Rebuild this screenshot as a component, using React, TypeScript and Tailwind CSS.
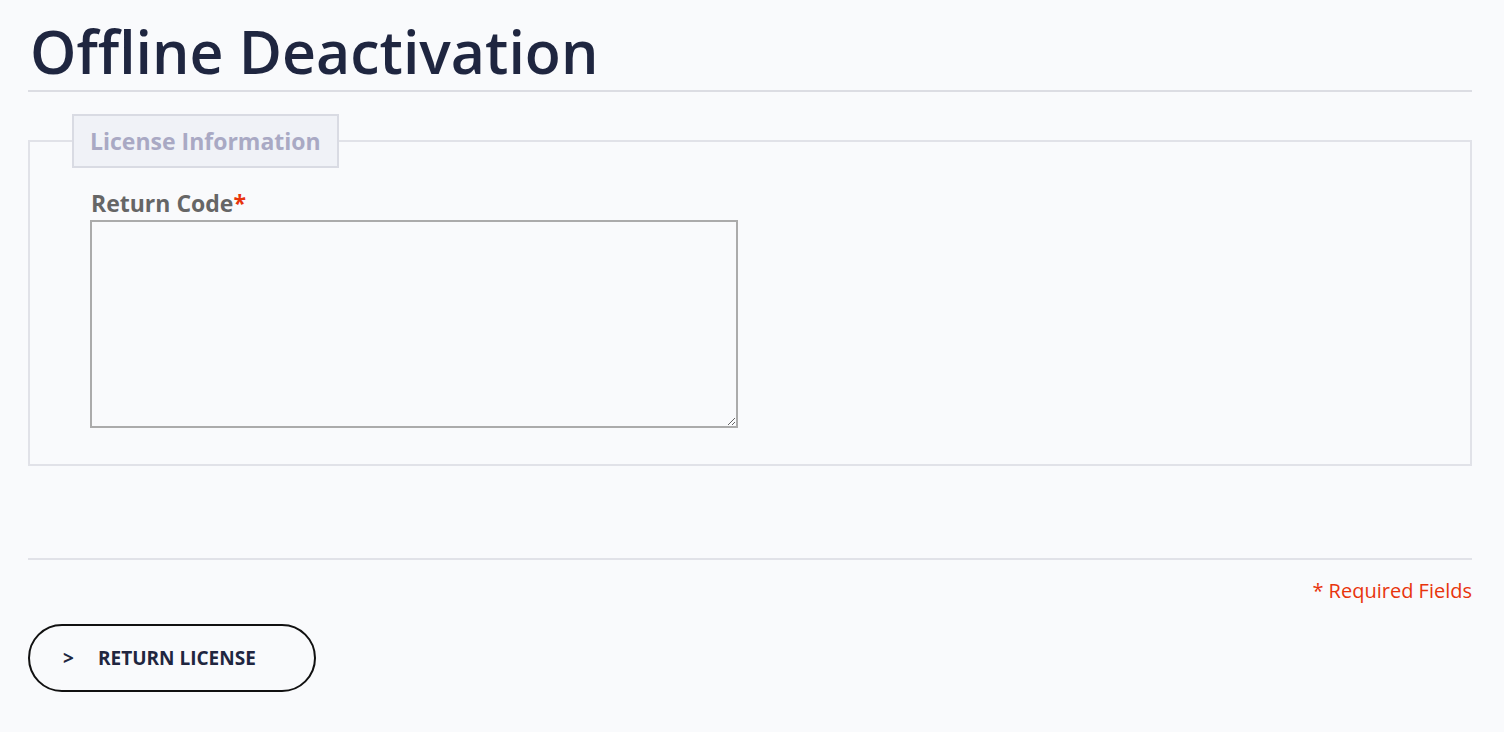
import React from "react";

export default function App() {
  return (
    <div className="min-h-[732px] w-full bg-[#f9fafc] pl-[28px] pr-[32px] pt-[12px]" style={{ fontFamily: '"Open Sans", "Noto Sans", sans-serif' }}>
      <h1 className="pl-[2px] text-[59px] leading-[78px] font-semibold text-[#1f2640]">Offline Deactivation</h1>
      <div className="h-[2px] bg-[#dcdde3]" />
      <fieldset className="mt-[22px] border-2 border-[#e1e2e8] pl-[42px] pr-[42px] pb-[36px] pt-[20px]">
        <legend className="border-2 border-[#d9dbe3] bg-[#f0f2f7] px-[16px] py-[9px] text-[23px] leading-[32px] font-bold text-[#a9a9c4]">
          License Information
        </legend>
        <div className="pl-[18px]">
          <label className="block pl-[1px] text-[23px] leading-[30px] font-bold text-[#666666]">
            Return Code<span className="text-[#e8340c]">*</span>
          </label>
          <textarea className="mt-[2px] block h-[208px] w-[648px] border-2 border-[#ababab] bg-[#f9fafc]" />
        </div>
      </fieldset>
      <div className="mt-[92px] h-[2px] bg-[#e1e2e8]" />
      <div className="mt-[17px] text-right text-[20px] leading-[28px] text-[#e8340c]">* Required Fields</div>
      <button className="mt-[19px] flex h-[68px] w-[288px] items-center rounded-full border-2 border-[#111111] pl-[33px] text-[19px] font-bold text-[#1f2640]">
        <span className="w-[35px] text-left">&gt;</span>
        <span>RETURN LICENSE</span>
      </button>
    </div>
  );
}
